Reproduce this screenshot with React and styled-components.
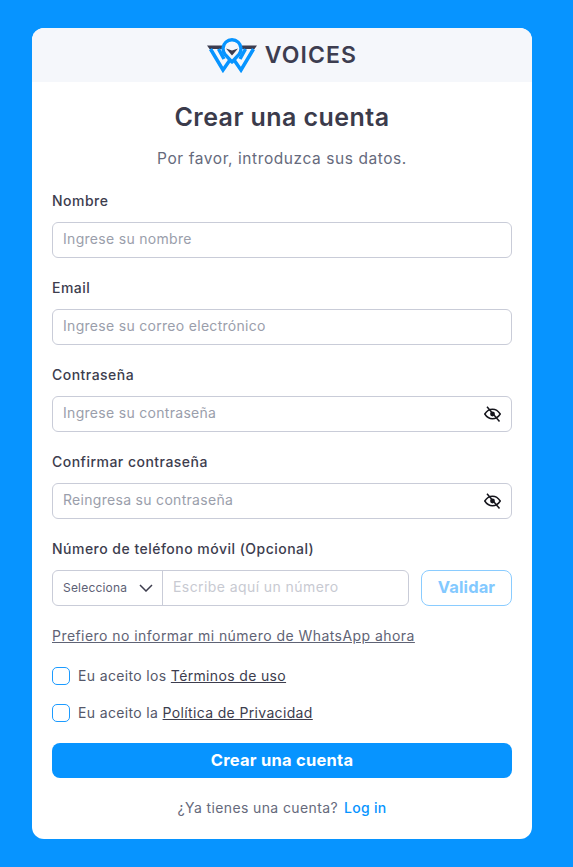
import React from "react";
import styled, { createGlobalStyle } from "styled-components";

const Global = createGlobalStyle`
  html, body { margin: 0; padding: 0; background: #0794ff; }
  * { box-sizing: border-box; }
  body { font-family: Inter, "Noto Sans", sans-serif; }
`;
const Page = styled.div`
  width: 573px; height: 867px; padding: 28px 41px 28px 32px; overflow: hidden;
`;
const Card = styled.main`
  width: 500px; height: 811px; background: #fff; border-radius: 12px; overflow: hidden;
  display: flex; flex-direction: column;
`;
const Header = styled.header`
  height: 54px; flex: none; background: #f5f7fb; display: flex; align-items: center; justify-content: center; gap: 8px;
`;
const Wordmark = styled.span`
  font-size: 23px; font-weight: 600; color: #3d3d50; letter-spacing: 1.1px; line-height: 1;
`;
const Body = styled.div`
  padding: 0 20px; display: flex; flex-direction: column; flex: 1;
`;
const Title = styled.h1`
  margin: 20px 0 0; font-size: 25px; line-height: 30px; font-weight: 600; color: #3b3b4b; text-align: center; letter-spacing: 0.45px;
`;
const Subtitle = styled.p`
  margin: 15px 0 0; font-size: 15.5px; line-height: 24px; color: #666a7c; text-align: center; letter-spacing: 0.57px;
`;
const Field = styled.div`
  margin-top: ${p => p.$top || 20}px; display: flex; flex-direction: column;
`;
const Label = styled.label`
  font-size: 14px; line-height: 19px; font-weight: 500; color: #3d3d4e; margin-bottom: 12px; letter-spacing: 0.48px;
`;
const InputBox = styled.div`
  height: 36px; border: 1px solid #c9ccd8; border-radius: 6px; display: flex; align-items: center; justify-content: space-between;
  padding: 0 10px; font-size: 14px; color: #9a9eab; letter-spacing: 0.3px;
`;
const PlaceholderText = styled.span`
  margin-top: -3px;
`;
const PhoneRow = styled.div`
  display: flex; gap: 12px; height: 36px;
`;
const PhoneBox = styled.div`
  width: 357px; border: 1px solid #c9ccd8; border-radius: 6px; display: flex;
`;
const Select = styled.div`
  width: 110px; border-right: 1px solid #c9ccd8; display: flex; align-items: center; justify-content: space-between;
  padding: 0 9px 1px 10px; font-size: 12px; color: #5d6175; letter-spacing: 0.2px;
`;
const PhoneInput = styled.div`
  flex: 1; display: flex; align-items: center; padding: 0 10px 3px; font-size: 14px; color: #c8cad2; letter-spacing: 0.42px;
`;
const Validate = styled.div`
  width: 91px; border: 1px solid #8accff; border-radius: 8px; display: flex; align-items: center; justify-content: center;
  padding-bottom: 2px; font-size: 16.5px; font-weight: 700; color: #83c9ff; letter-spacing: 0.1px;
`;
const SkipLink = styled.a`
  margin-top: 20px; font-size: 14px; line-height: 20px; color: #5f6375; text-decoration: underline; letter-spacing: 0.45px;
`;
const Checks = styled.div`
  margin-top: 21px; display: flex; flex-direction: column; gap: 19px;
`;
const CheckRow = styled.div`
  display: flex; align-items: center; gap: 8px; font-size: 14px; line-height: 18px; color: #55586a; letter-spacing: 0.35px;
`;
const Box = styled.span`
  width: 18px; height: 18px; border: 1.5px solid #1c9bff; border-radius: 5px; flex: none;
`;
const TermLink = styled.a`
  color: #3d3d4e; text-decoration: underline;
`;
const Submit = styled.button`
  margin-top: 21px; height: 35px; padding: 0 0 2px; border: 0; border-radius: 8px; background: #0794ff; color: #fff;
  font-family: inherit; font-size: 16.5px; font-weight: 700; letter-spacing: 0.25px;
`;
const Footer = styled.div`
  margin-top: 20px; display: flex; justify-content: center; gap: 6px; font-size: 14px; line-height: 20px; color: #666a7c; letter-spacing: 0.38px;
`;
const Login = styled.a`
  color: #0794ff; font-weight: 500; letter-spacing: 0.3px;
`;

const Logo = () => (
  <svg width="50" height="35" viewBox="0 0 50 35" aria-hidden="true">
    <path d="M0 7.500h15l2 3.500H2.500zM50 7.500H35l-2 3.500h14.500z" fill="#3d3d50" />
    <path d="M3.500 11 16 32 25 19 34 32 46.500 11M11.500 11 17 21M38.500 11 33 21" fill="none" stroke="#0794ff" strokeWidth="3.500" />
    <path d="M25 24 18 16.360A9 9 0 1 1 32 16.360z" fill="#f5f7fb" stroke="#0794ff" strokeWidth="3.400" strokeLinejoin="round" />
    <path d="M19 10.500 25 12.500 31 10.500 25 17.500z" fill="#3d3d50" />
  </svg>
);
const EyeOff = () => (
  <svg width="17" height="16" viewBox="0 0 17 16" fill="none" stroke="#15151c" strokeWidth="1.500" aria-hidden="true">
    <path d="M.8 8C2.800 4.800 5.400 3.200 8.500 3.200S14.200 4.800 16.200 8C14.200 11.200 11.600 12.800 8.500 12.800S2.800 11.200.8 8z" />
    <circle cx="8.500" cy="8" r="2.400" fill="#15151c" stroke="none" />
    <path d="M3 .8 15.500 15.500" />
  </svg>
);
const Chevron = () => (
  <svg width="14" height="8" viewBox="0 0 14 8" fill="none" stroke="#3d3d4e" strokeWidth="1.500" aria-hidden="true">
    <path d="M1 1l6 6 6-6" />
  </svg>
);

export default function App() {
  return (
    <Page>
      <Global />
      <Card>
        <Header>
          <Logo />
          <Wordmark>VOICES</Wordmark>
        </Header>
        <Body>
          <Title>Crear una cuenta</Title>
          <Subtitle>Por favor, introduzca sus datos.</Subtitle>
          <Field $top={20}>
            <Label>Nombre</Label>
            <InputBox><PlaceholderText>Ingrese su nombre</PlaceholderText></InputBox>
          </Field>
          <Field>
            <Label>Email</Label>
            <InputBox><PlaceholderText>Ingrese su correo electrónico</PlaceholderText></InputBox>
          </Field>
          <Field>
            <Label>Contraseña</Label>
            <InputBox><PlaceholderText>Ingrese su contraseña</PlaceholderText><EyeOff /></InputBox>
          </Field>
          <Field>
            <Label>Confirmar contraseña</Label>
            <InputBox><PlaceholderText>Reingresa su contraseña</PlaceholderText><EyeOff /></InputBox>
          </Field>
          <Field>
            <Label>Número de teléfono móvil (Opcional)</Label>
            <PhoneRow>
              <PhoneBox>
                <Select>Selecciona<Chevron /></Select>
                <PhoneInput>Escribe aquí un número</PhoneInput>
              </PhoneBox>
              <Validate>Validar</Validate>
            </PhoneRow>
          </Field>
          <SkipLink>Prefiero no informar mi número de WhatsApp ahora</SkipLink>
          <Checks>
            <CheckRow><Box /><span>Eu aceito los <TermLink>Términos de uso</TermLink></span></CheckRow>
            <CheckRow><Box /><span>Eu aceito la <TermLink>Política de Privacidad</TermLink></span></CheckRow>
          </Checks>
          <Submit>Crear una cuenta</Submit>
          <Footer>¿Ya tienes una cuenta? <Login>Log in</Login></Footer>
        </Body>
      </Card>
    </Page>
  );
}
